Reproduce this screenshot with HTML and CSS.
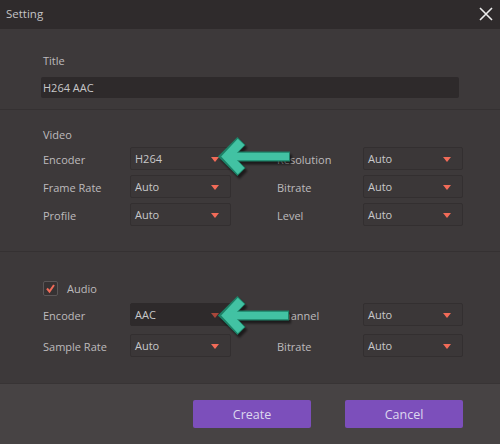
FILE: index.html
```html
<!DOCTYPE html>
<html>
<head>
<meta charset="utf-8">
<link rel="stylesheet" href="styles.css">
</head>
<body>
<div class="dialog">
  <div class="titlebar">
    <span class="title-text">Setting</span>
    <svg class="close" width="14" height="14" viewBox="0 0 14 14"><path d="M1 1 L13 13 M13 1 L1 13" stroke="#ececec" stroke-width="1.6" fill="none"/></svg>
  </div>

  <div class="sec sec-title">
    <div class="label">Title</div>
    <div class="title-input">H264 AAC</div>
  </div>

  <div class="sec sec-video">
    <div class="heading">Video</div>
    <div class="grid">
      <div class="lbl">Encoder</div>
      <div class="sel"><span>H264</span><i class="tri"></i></div>
      <div></div>
      <div class="lbl">Resolution</div>
      <div class="sel"><span>Auto</span><i class="tri"></i></div>

      <div class="lbl">Frame Rate</div>
      <div class="sel"><span>Auto</span><i class="tri"></i></div>
      <div></div>
      <div class="lbl">Bitrate</div>
      <div class="sel"><span>Auto</span><i class="tri"></i></div>

      <div class="lbl">Profile</div>
      <div class="sel"><span>Auto</span><i class="tri"></i></div>
      <div></div>
      <div class="lbl">Level</div>
      <div class="sel"><span>Auto</span><i class="tri"></i></div>
    </div>
  </div>

  <div class="sec sec-audio">
    <div class="check-row">
      <span class="checkbox"><svg width="13" height="13" viewBox="0 0 13 13"><path d="M3 6.5 L5.5 9.5 L10 3" stroke="#f06a58" stroke-width="2" fill="none"/></svg></span>
      <span class="check-label">Audio</span>
    </div>
    <div class="grid grid-audio">
      <div class="lbl">Encoder</div>
      <div class="sel sel-dark"><span>AAC</span><i class="tri tri-dim"></i></div>
      <div></div>
      <div class="lbl">Channel</div>
      <div class="sel"><span>Auto</span><i class="tri"></i></div>

      <div class="lbl">Sample Rate</div>
      <div class="sel"><span>Auto</span><i class="tri"></i></div>
      <div></div>
      <div class="lbl">Bitrate</div>
      <div class="sel"><span>Auto</span><i class="tri"></i></div>
    </div>
  </div>

  <div class="footer">
    <button class="btn">Create</button>
    <button class="btn">Cancel</button>
  </div>

  <svg class="arrow arrow1" width="90" height="50" viewBox="0 0 90 50">
    <defs>
      <filter id="sh1" x="-20%" y="-20%" width="140%" height="140%">
        <feGaussianBlur stdDeviation="1.2"/>
      </filter>
    </defs>
    <g transform="translate(2,3)" stroke="rgba(0,0,0,0.55)" fill="none" filter="url(#sh1)">
      <path d="M31.5 6 L16 21.5 L31.5 37" stroke-width="11.5"/>
      <path d="M18 21.5 L80 21.5" stroke-width="10"/>
    </g>
    <g fill="none">
      <path d="M31.5 6 L16 21.5 L31.5 37" stroke="#1d8066" stroke-width="11.5"/>
      <path d="M18 21.5 L80 21.5" stroke="#1d8066" stroke-width="10"/>
      <path d="M31.1 6.8 L17.4 21.5 L31.1 36.2" stroke="#42c2a3" stroke-width="9.1"/>
      <path d="M19 21.5 L79 21.5" stroke="#42c2a3" stroke-width="7.6"/>
    </g>
  </svg>

  <svg class="arrow arrow2" width="90" height="50" viewBox="0 0 90 50">
    <defs>
      <filter id="sh2" x="-20%" y="-20%" width="140%" height="140%">
        <feGaussianBlur stdDeviation="1.2"/>
      </filter>
    </defs>
    <g transform="translate(2,3)" stroke="rgba(0,0,0,0.55)" fill="none" filter="url(#sh2)">
      <path d="M31.5 6 L16 21.5 L31.5 37" stroke-width="11.5"/>
      <path d="M18 21.5 L79 21.5" stroke-width="10"/>
    </g>
    <g fill="none">
      <path d="M31.5 6 L16 21.5 L31.5 37" stroke="#1d8066" stroke-width="11.5"/>
      <path d="M18 21.5 L79 21.5" stroke="#1d8066" stroke-width="10"/>
      <path d="M31.1 6.8 L17.4 21.5 L31.1 36.2" stroke="#42c2a3" stroke-width="9.1"/>
      <path d="M19 21.5 L78 21.5" stroke="#42c2a3" stroke-width="7.6"/>
    </g>
  </svg>
</div>
</body>
</html>
```

FILE: styles.css
```css
* { box-sizing: border-box; }
html, body { margin: 0; padding: 0; }
body {
  width: 500px;
  height: 444px;
  background: #3d393a;
  font-family: "Open Sans", "Noto Sans", sans-serif;
  font-size: 11px;
  color: #bdbbbd;
  overflow: hidden;
}
.dialog {
  position: relative;
  width: 500px;
  height: 444px;
  display: flex;
  flex-direction: column;
}
.titlebar {
  height: 29px;
  background: #2f2b2c;
  display: flex;
  align-items: center;
  justify-content: space-between;
  padding: 0 7px 2px 6px;
  flex-shrink: 0;
}
.title-text { font-size: 11.5px; color: #c4c4c6; }
.close { margin-top: 1px; }

.sec { border-bottom: 1px solid #353132; }
.sec-title {
  height: 81px;
  padding: 24px 41px 0 41px;
}
.label { padding-left: 2px; line-height: 16px; height: 16px; }
.title-input {
  margin-top: 8px;
  height: 21px;
  width: 418px;
  background: #2e2a2b;
  border-radius: 2px;
  padding-left: 2px;
  line-height: 21px;
  color: #c8c8ca;
}

.sec-video {
  height: 142px;
  padding: 17px 0 0 43px;
}
.heading { line-height: 16px; height: 16px; }
.grid {
  display: grid;
  grid-template-columns: 87px 101px 46px 86px 100px;
  grid-auto-rows: 23px;
  row-gap: 5px;
  margin-top: 4px;
}
.lbl { padding-top: 5px; line-height: 16px; white-space: nowrap; }
.sel {
  border: 1px solid #332f30;
  border-radius: 2px;
  background: #3b3738;
  display: flex;
  align-items: center;
  justify-content: space-between;
  padding: 0 11px 0 4px;
  color: #c8c8ca;
}
.sel-dark { background: #2e2a2b; border-color: #2e2a2b; }
.tri {
  width: 0; height: 0;
  border-left: 4.5px solid transparent;
  border-right: 4.5px solid transparent;
  border-top: 5px solid #f26b58;
  margin-top: 1px;
}
.tri-dim { border-top-color: #a9473a; }

.sec-audio {
  height: 132px;
  padding: 29px 0 0 43px;
  border-bottom: 1px solid #383435;
}
.check-row { display: flex; align-items: center; height: 15px; }
.checkbox {
  width: 15px; height: 15px;
  border: 1px solid #5a5657;
  border-radius: 2px;
  background: #363233;
  display: flex; align-items: center; justify-content: center;
}
.check-label { margin-left: 9px; line-height: 16px; }
.grid-audio { margin-top: 7px; row-gap: 8px; }

.footer {
  flex: 1;
  background: #474344;
  display: flex;
  justify-content: flex-end;
  align-items: flex-start;
  padding: 16px 37px 0 0;
  gap: 34px;
}
.btn {
  width: 118px;
  height: 28px;
  border: none;
  border-radius: 2px;
  background: #7c4fbb;
  color: #dcd8ef;
  font-family: "Open Sans", "Noto Sans", sans-serif;
  font-size: 12.5px;
  padding: 0;
}

.arrow { position: absolute; }
.arrow1 { left: 210px; top: 135px; }
.arrow2 { left: 210px; top: 294px; }
```
